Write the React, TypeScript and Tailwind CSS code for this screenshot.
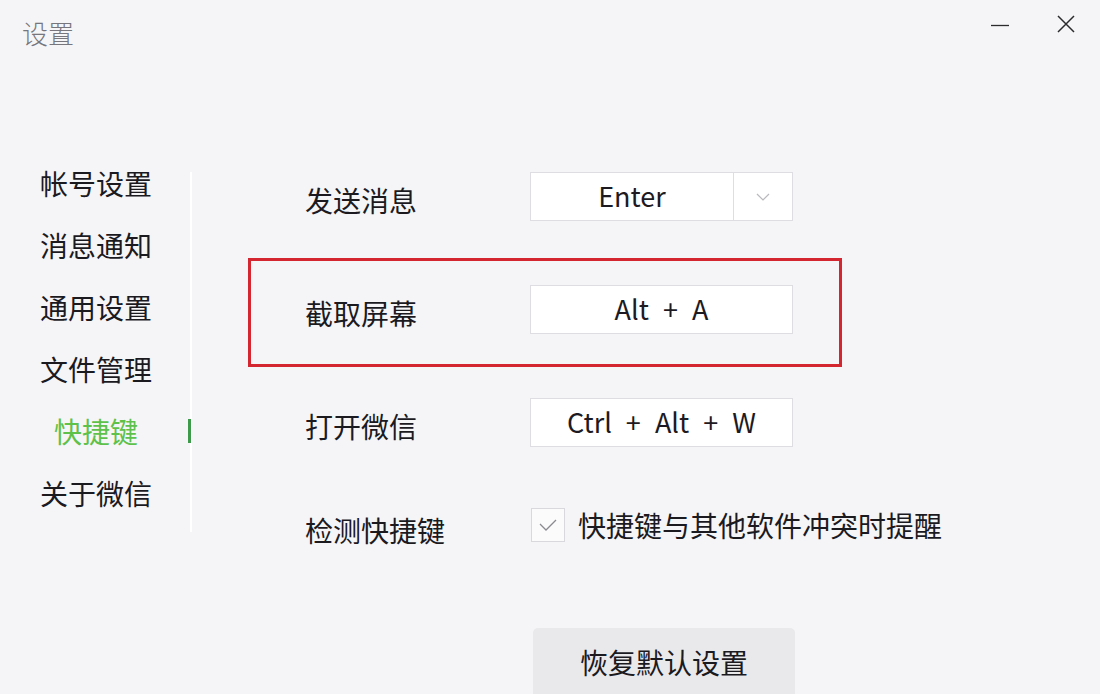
import React from 'react';

const navItems = ['帐号设置', '消息通知', '通用设置', '文件管理', '快捷键', '关于微信'];

const KeyBox: React.FC<{ children: React.ReactNode }> = ({ children }) => (
  <div className="w-[263px] h-[49px] mb-[6px] shrink-0 bg-white border border-[#dedee2] flex items-center justify-center text-[27px] [word-spacing:8px] text-[#1d1a22]">
    {children}
  </div>
);

export default function App() {
  return (
    <div
      className="w-[1100px] h-[694px] bg-[#f5f5f7] overflow-hidden flex flex-col"
      style={{ fontFamily: '"Noto Sans CJK SC", "Noto Sans", sans-serif' }}
    >
      {/* Title bar */}
      <div className="flex items-start justify-between h-[145px] shrink-0 pl-[22px] pr-[24px]">
        <div className="pt-[15px] text-[26px] leading-[36px] text-[#77767c] font-light">设置</div>
        <div className="flex items-center gap-[46px] pt-[10px]">
          <svg width="20" height="30" viewBox="0 0 20 30">
            <line x1="1" y1="15.5" x2="19" y2="15.5" stroke="#2b2b2e" strokeWidth="1.3" />
          </svg>
          <svg width="20" height="30" viewBox="0 0 20 30">
            <path d="M2 6 L18 22 M18 6 L2 22" stroke="#2b2b2e" strokeWidth="1.5" />
          </svg>
        </div>
      </div>

      <div className="flex flex-1">
        {/* Sidebar */}
        <div className="w-[190px] pl-[40px] pt-[7px]">
          <div className="w-[112px] flex flex-col">
            {navItems.map((item) => (
              <div
                key={item}
                className={`h-[62px] flex items-center justify-center text-[28px] leading-none ${
                  item === '快捷键' ? 'text-[#5ec14a]' : 'text-[#1b1a1f]'
                }`}
              >
                {item}
              </div>
            ))}
          </div>
        </div>

        {/* Divider */}
        <div className="relative w-[2px] bg-white mt-[27px] h-[360px]">
          <div className="absolute left-[-2px] top-[247px] w-[3px] h-[24px] bg-[#3c9a4a]" />
        </div>

        {/* Content */}
        <div className="flex flex-col ml-[56px] gap-[4px]">
          <div className="h-[109px] border-[3px] border-transparent px-[54px] flex items-center">
            <div className="w-[225px] shrink-0 text-[28px] text-[#1b1a1f]">发送消息</div>
            <div className="w-[263px] h-[49px] mb-[6px] shrink-0 bg-white border border-[#dedee2] flex">
              <div className="w-[203px] flex items-center justify-center text-[27px] text-[#1d1a22] border-r border-[#dedee2]">
                Enter
              </div>
              <div className="flex-1 flex items-center justify-center">
                <svg width="14" height="8" viewBox="0 0 14 8">
                  <path d="M1 1 L7 7 L13 1" fill="none" stroke="#b9b9be" strokeWidth="1.2" />
                </svg>
              </div>
            </div>
          </div>

          <div className="h-[109px] self-start border-[3px] border-[#d42630] pl-[54px] pr-[46px] flex items-center">
            <div className="w-[225px] shrink-0 text-[28px] text-[#1b1a1f]">截取屏幕</div>
            <KeyBox>Alt + A</KeyBox>
          </div>

          <div className="h-[109px] border-[3px] border-transparent px-[54px] flex items-center">
            <div className="w-[225px] shrink-0 text-[28px] text-[#1b1a1f]">打开微信</div>
            <KeyBox>Ctrl + Alt + W</KeyBox>
          </div>

          <div className="h-[82px] px-[57px] flex items-center">
            <div className="w-[226px] shrink-0 text-[28px] text-[#1b1a1f] pt-[10px]">检测快捷键</div>
            <div className="w-[34px] h-[34px] shrink-0 bg-[#fbfbfc] border border-[#d9d9dd] flex items-center justify-center">
              <svg width="20" height="14" viewBox="0 0 20 14">
                <path d="M2 6 L8 12 L18 2" fill="none" stroke="#8a8a90" strokeWidth="1.3" />
              </svg>
            </div>
            <div className="ml-[13px] text-[28px] text-[#1b1a1f] whitespace-nowrap">快捷键与其他软件冲突时提醒</div>
          </div>

          <div className="ml-[285px] mt-[58px] w-[262px] h-[72px] shrink-0 rounded-[5px] bg-[#e9e9ec] flex items-center justify-center text-[28px] text-[#1b1a1f] pb-[4px]">
            恢复默认设置
          </div>
        </div>
      </div>
    </div>
  );
}
